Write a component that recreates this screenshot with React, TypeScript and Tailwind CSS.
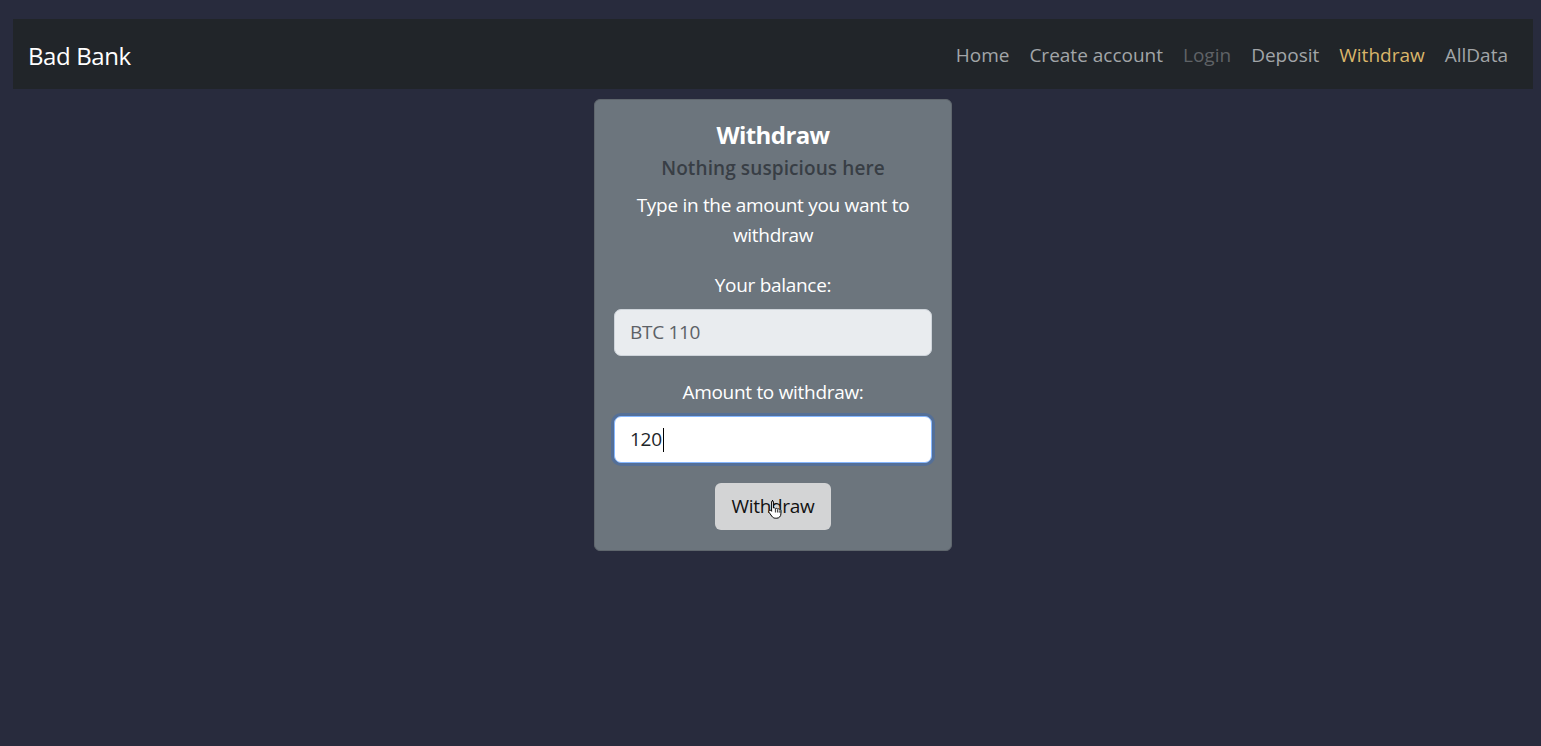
import React from 'react';

const links = [
    { label: 'Home', cls: 'text-[#a2a5a8]' },
    { label: 'Create account', cls: 'text-[#a2a5a8]' },
    { label: 'Login', cls: 'text-[#5f6266]' },
    { label: 'Deposit', cls: 'text-[#a2a5a8]' },
    { label: 'Withdraw', cls: 'text-[#d9b56a]' },
    { label: 'AllData', cls: 'text-[#a2a5a8]' },
];

export default function App() {
    return (
        <div className="min-h-[746px] bg-[#282b3d] pt-[19px] pl-[13px] pr-[8px] font-['Open_Sans',sans-serif]">
            {/* Navbar */}
            <nav className="h-[70px] bg-[#212529] flex items-center justify-between pl-[15px] pr-[15px] pt-[3px]">
                <span className="text-[24px] text-white tracking-[-0.4px]">Bad Bank</span>
                <div className="flex items-center">
                    {links.map(l => (
                        <span key={l.label} className={`px-[10px] text-[19px] ${l.cls}`}>{l.label}</span>
                    ))}
                </div>
            </nav>

            {/* Card */}
            <div className="flex justify-center pt-[10px]">
                <div className="w-[358px] bg-[#6c757d] rounded-[6px] border border-[#5f666d] px-[19px] pt-[18px] pb-[20px] flex flex-col items-center text-center">
                    <h5 className="text-[24px] font-bold text-white leading-[34px] tracking-[-0.6px]">Withdraw</h5>
                    <h6 className="text-[19px] font-semibold text-[#383e45] leading-[32px] tracking-[0.1px]">Nothing suspicious here</h6>
                    <p className="text-[19px] text-white leading-[30px] mt-[6px] tracking-[-0.3px] px-[10px]">Type in the amount you want to withdraw</p>

                    <label className="text-[19px] text-white leading-[30px] mt-[20px] tracking-[-0.3px]">Your balance:</label>
                    <div className="mt-[9px] w-full h-[47px] rounded-[7px] bg-[#e9ecef] border border-[#ced4da] flex items-center px-[15px] text-[19px] text-[#5c6166] tracking-[-0.3px]">
                        BTC 110
                    </div>

                    <label className="text-[19px] text-white leading-[30px] mt-[21px] tracking-[-0.3px]">Amount to withdraw:</label>
                    <div className="mt-[9px] w-full h-[47px] rounded-[7px] bg-white border border-[#86b7fe] shadow-[0_0_0_3px_rgba(40,100,200,0.35)] flex items-center px-[15px] text-[19px] text-[#212529] tracking-[-0.3px]">
                        120<span className="inline-block w-[1px] h-[24px] bg-black ml-[1px]" />
                    </div>

                    <div className="relative mt-[20px]">
                        <button className="h-[47px] px-[16px] rounded-[6px] bg-[#d3d4d5] text-[19px] text-[#111] tracking-[-0.3px]">Withdraw</button>
                        {/* mouse pointer */}
                        <svg className="absolute left-[52px] top-[16px] pointer-events-none" width="16" height="20" viewBox="0 0 16 20">
                            <path d="M5 1.5c.8 0 1.4.6 1.4 1.4V9l.3-.1c.7-.2 1.4.1 1.7.7.6-.4 1.5-.3 2 .3.6-.3 1.4-.1 1.8.5.7-.3 1.6.2 1.7 1v3.5c0 2.4-1.8 4.3-4.2 4.3H8.4c-1.5 0-2.8-.8-3.6-2L2 13.3c-.4-.7-.2-1.5.4-1.9.6-.3 1.3-.2 1.7.3l.5.6V2.9c0-.8.6-1.4 1.4-1.4z" fill="#fff" stroke="#000" strokeWidth="1" />
                            <path d="M8.4 10v3.5M10.4 10.5v3M12.2 11.3v2.4" stroke="#000" strokeWidth="0.8" />
                        </svg>
                    </div>
                </div>
            </div>
        </div>
    );
}
